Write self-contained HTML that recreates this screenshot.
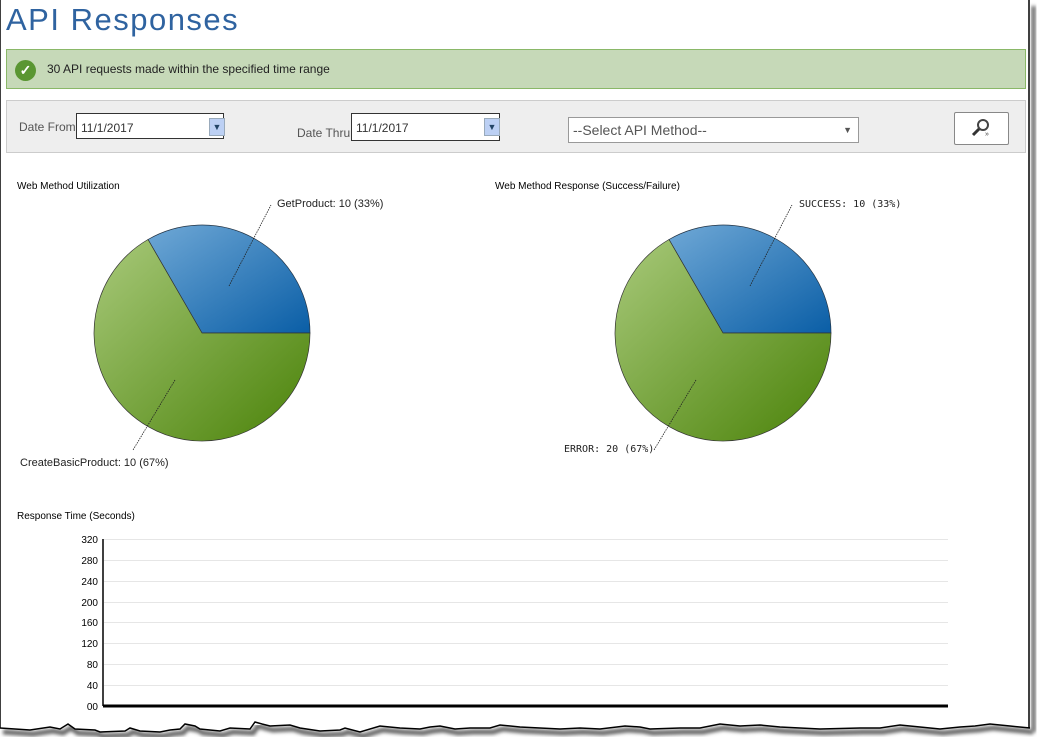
<!DOCTYPE html>
<html><head><meta charset="utf-8"><style>
body{margin:0;width:1045px;height:748px;background:#fff;position:relative;overflow:hidden;font-family:"Liberation Sans",sans-serif}
.a{position:absolute}
</style></head><body>
<svg class="a" style="left:0;top:0" width="1045" height="748">
<defs>
<linearGradient id="b" x1="0" y1="0" x2="1" y2="1"><stop offset="0" stop-color="#6fa8d6"/><stop offset="1" stop-color="#0a5ea6"/></linearGradient>
<linearGradient id="g" x1="0" y1="0" x2="1" y2="1"><stop offset="0" stop-color="#a8c97a"/><stop offset="1" stop-color="#4a8208"/></linearGradient>
<filter id="s"><feGaussianBlur stdDeviation="1.8"/></filter>
<path id="edge" d="M0,728 L30,730 L50,727 L60,729 L68,724 L75,729 L95,730 L100,732 L125,731 L130,728 L140,731 L160,732 L170,730 L180,729 L185,724 L195,726 L200,729 L220,731 L230,728 L250,729 L255,722 L262,724 L270,726 L290,725 L300,728 L320,731 L340,730 L345,728 L360,732 L380,726 L400,728 L420,729 L430,727 L440,726 L455,729 L470,728 L490,728 L500,725 L520,727 L540,728 L560,729 L580,728 L600,729 L625,726 L640,727 L650,729 L680,728 L700,728 L720,724 L740,726 L760,725 L780,727 L800,728 L820,729 L860,728 L880,728 L900,725 L920,727 L940,729 L960,727 L975,726 L990,724 L1000,725 L1010,726 L1030,728"/>
</defs>
<use href="#edge" transform="translate(3,4)" stroke="#666" stroke-width="5" fill="none" filter="url(#s)"/>
<rect x="1031" y="6" width="5" height="726" fill="#777" filter="url(#s)"/>
<path d="M0,0 H1029 V728 L1010,726 L1000,725 L990,724 L975,726 L960,727 L940,729 L920,727 L900,725 L880,728 L860,728 L820,729 L800,728 L780,727 L760,725 L740,726 L720,724 L700,728 L680,728 L650,729 L640,727 L625,726 L600,729 L580,728 L560,729 L540,728 L520,727 L500,725 L490,728 L470,728 L455,729 L440,726 L430,727 L420,729 L400,728 L380,726 L360,732 L345,728 L340,730 L320,731 L300,728 L290,725 L270,726 L262,724 L255,722 L250,729 L230,728 L220,731 L200,729 L195,726 L185,724 L180,729 L170,730 L160,732 L140,731 L130,728 L125,731 L100,732 L95,730 L75,729 L68,724 L60,729 L50,727 L30,730 L0,728Z" fill="#fff"/>
<path d="M0,0 V728 M1029,0 V728" stroke="#000" stroke-width="1.5"/>
<use href="#edge" stroke="#000" stroke-width="1.5" fill="none"/>
<!-- pie 1 -->
<path d="M202,333 L310,333 A108,108 0 0 0 148,239.5Z" fill="url(#b)" stroke="#234" stroke-width="0.7"/>
<path d="M202,333 L148,239.5 A108,108 0 1 0 310,333Z" fill="url(#g)" stroke="#333" stroke-width="0.7"/>
<path d="M229,286 L271,205 M175,380 L133,450" stroke="#222" stroke-width="0.8" stroke-dasharray="1.5,1"/>
<!-- pie 2 -->
<path d="M723,333 L831,333 A108,108 0 0 0 669,239.5Z" fill="url(#b)" stroke="#234" stroke-width="0.7"/>
<path d="M723,333 L669,239.5 A108,108 0 1 0 831,333Z" fill="url(#g)" stroke="#333" stroke-width="0.7"/>
<path d="M750,286 L792,205 M696,380 L654,450" stroke="#222" stroke-width="0.8" stroke-dasharray="1.5,1"/>
<!-- chart -->
<g stroke="#e6e6e6">
<path d="M104,539.5H948M104,560.5H948M104,581.5H948M104,602.5H948M104,622.5H948M104,643.5H948M104,664.5H948M104,685.5H948"/>
</g>
<path d="M103,539V706" stroke="#000" stroke-width="1.5"/>
<path d="M103,706H948" stroke="#000" stroke-width="3"/>
<g font-family="Liberation Sans Narrow,Liberation Sans,sans-serif" font-size="10" text-anchor="end" fill="#000">
<text x="98" y="543">320</text><text x="98" y="564">280</text><text x="98" y="585">240</text><text x="98" y="606">200</text><text x="98" y="626">160</text><text x="98" y="647">120</text><text x="98" y="668">80</text><text x="98" y="689">40</text><text x="98" y="710">00</text>
</g>
</svg>
<div class="a" style="left:6px;top:2px;font-size:31px;color:#2f63a0;letter-spacing:1.5px">API Responses</div>
<div class="a" style="left:6px;top:49px;width:1018px;height:38px;background:#c6d9b8;border:1px solid #8ab868"></div>
<div class="a" style="left:15px;top:60px;width:21px;height:21px;border-radius:50%;background:#5a9632;color:#fff;font-size:14px;text-align:center;line-height:21px;font-weight:bold">✓</div>
<div class="a" style="left:47px;top:62px;font-size:12px;color:#222">30 API requests made within the specified time range</div>
<div class="a" style="left:6px;top:100px;width:1018px;height:51px;background:#eee;border:1px solid #ccc"></div>
<div class="a" style="left:19px;top:120px;font-size:12px;color:#555">Date From</div>
<div class="a" style="left:76px;top:113px;width:148px;height:26px;border:1px solid #333;background:#fff;font-size:12px;color:#333;line-height:28px;padding-left:4px;box-sizing:border-box">11/1/2017</div>
<div class="a" style="left:209px;top:118px;width:14px;height:16px;background:#bcd0f4;border:1px solid #9ab;color:#246;font-size:9px;text-align:center;line-height:16px">▼</div>
<div class="a" style="left:297px;top:126px;font-size:12px;color:#555">Date Thru</div>
<div class="a" style="left:351px;top:113px;width:149px;height:28px;border:1px solid #333;background:#fff;font-size:12px;color:#333;line-height:28px;padding-left:4px;box-sizing:border-box">11/1/2017</div>
<div class="a" style="left:484px;top:118px;width:14px;height:16px;background:#bcd0f4;border:1px solid #9ab;color:#246;font-size:9px;text-align:center;line-height:16px">▼</div>
<div class="a" style="left:568px;top:117px;width:291px;height:26px;border:1px solid #999;background:#fff;font-size:14px;color:#555;line-height:25px;padding-left:4px;box-sizing:border-box">--Select API Method--<span style="position:absolute;right:6px;font-size:9px;color:#555">▼</span></div>
<div class="a" style="left:954px;top:112px;width:53px;height:31px;border:1px solid #888;border-radius:2px;background:#fff"></div>
<svg class="a" style="left:970px;top:117px" width="24" height="22"><circle cx="13" cy="8" r="5" fill="none" stroke="#444" stroke-width="2"/><path d="M9,12 L3,18" stroke="#333" stroke-width="3"/><text x="15" y="19" font-size="7" fill="#444" font-family="Liberation Sans">»</text></svg>
<div class="a" style="left:17px;top:181px;font-size:10px">Web Method Utilization</div>
<div class="a" style="left:277px;top:198px;font-size:11px;color:#222">GetProduct: 10 (33%)</div>
<div class="a" style="left:20px;top:457px;font-size:11px;color:#222">CreateBasicProduct: 10 (67%)</div>
<div class="a" style="left:495px;top:181px;font-size:10px">Web Method Response (Success/Failure)</div>
<div class="a" style="left:799px;top:199px;font-size:10px;font-family:'DejaVu Sans Mono',monospace;color:#222">SUCCESS: 10 (33%)</div>
<div class="a" style="left:564px;top:444px;font-size:10px;font-family:'DejaVu Sans Mono',monospace;color:#222">ERROR: 20 (67%)</div>
<div class="a" style="left:17px;top:511px;font-size:10px">Response Time (Seconds)</div>
</body></html>
